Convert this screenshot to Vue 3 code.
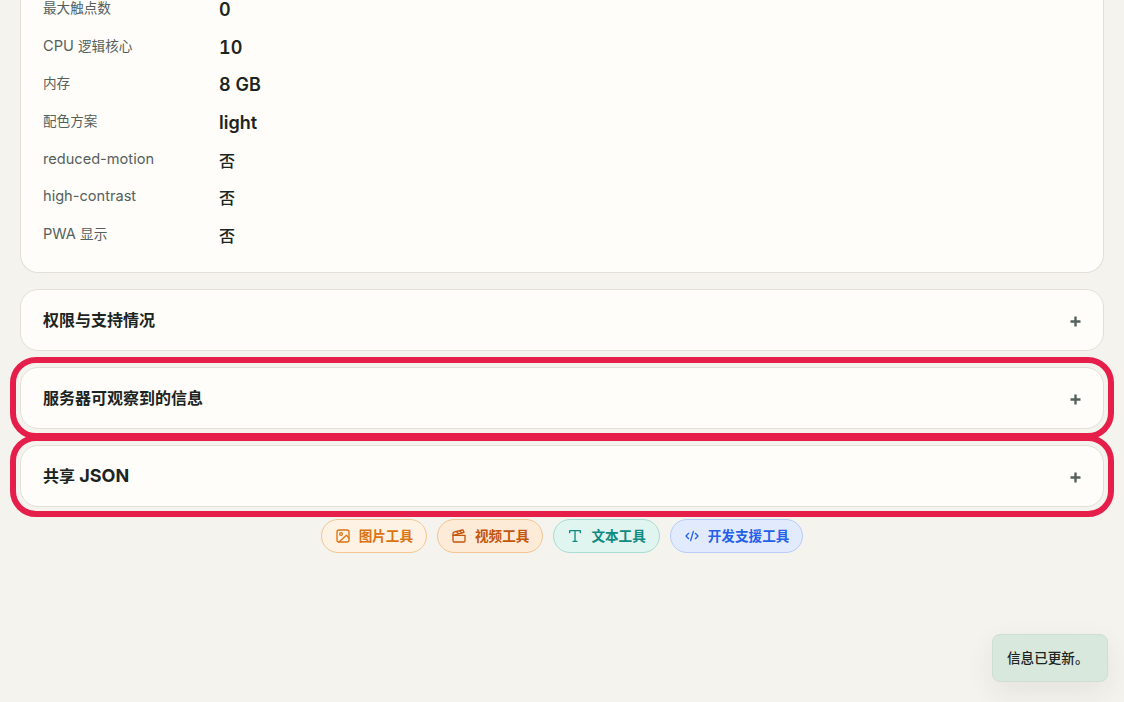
<script setup>
const split = (t) => t.split(/([\x00-\x7f]+)/).filter(Boolean).map((text) => ({
  text,
  lat: /^[\x00-\x7f]+$/.test(text),
}))

const rows = [
  ['最大触点数', '0'],
  ['CPU 逻辑核心', '10'],
  ['内存', '8 GB'],
  ['配色方案', 'light'],
  ['reduced-motion', '否'],
  ['high-contrast', '否'],
  ['PWA 显示', '否'],
].map(([label, value]) => ({ key: label, label: split(label), value: split(value) }))

const panels = [
  { key: 'a', title: split('权限与支持情况'), marked: false },
  { key: 'b', title: split('服务器可观察到的信息'), marked: true },
  { key: 'c', title: split('共享 JSON'), marked: true },
]
</script>

<template>
  <div class="page">
    <section class="card">
      <div v-for="r in rows" :key="r.key" class="row">
        <span class="label"><span v-for="(s, i) in r.label" :key="i" :class="{ lat: s.lat }">{{ s.text }}</span></span>
        <span class="value"><span v-for="(s, i) in r.value" :key="i" :class="{ lat: s.lat }">{{ s.text }}</span></span>
      </div>
    </section>

    <div class="panels">
      <div v-for="p in panels" :key="p.key" class="panel">
        <span class="panel-title"><span v-for="(s, i) in p.title" :key="i" :class="{ lat: s.lat }">{{ s.text }}</span></span>
        <svg class="plus" width="11" height="11" viewBox="0 0 11 11" aria-hidden="true">
          <path d="M5.500 0.500v10M0.500 5.500h10" stroke="currentColor" stroke-width="2.400" fill="none" />
        </svg>
        <span v-if="p.marked" class="mark"></span>
      </div>
    </div>

    <nav class="tools">
      <a class="tool orange">
        <svg width="16" height="16" viewBox="0 0 24 24" fill="none" stroke="currentColor" stroke-width="2" stroke-linecap="round" stroke-linejoin="round">
          <rect x="3" y="3" width="18" height="18" rx="3" />
          <circle cx="9" cy="9" r="2" />
          <path d="M21 15l-4-4L6 21" />
        </svg>
        <span class="tool-text">图片工具</span>
      </a>
      <a class="tool amber">
        <svg width="16" height="16" viewBox="0 0 24 24" fill="none" stroke="currentColor" stroke-width="2" stroke-linecap="round" stroke-linejoin="round">
          <path d="M3 11h18v8a2 2 0 0 1-2 2H5a2 2 0 0 1-2-2z" />
          <path d="M3 11V8a2 2 0 0 1 1.500-1.900L17 3l1 0 1.500 3.500L3.500 11" />
          <path d="M8 5l3 3.500M13 4l3 3.500" />
        </svg>
        <span class="tool-text">视频工具</span>
      </a>
      <a class="tool teal">
        <svg width="16" height="16" viewBox="0 0 24 24" fill="none" stroke="currentColor" stroke-width="2" stroke-linecap="round" stroke-linejoin="round">
          <path d="M4 7V4h16v3M12 4v16M9 20h6" />
        </svg>
        <span class="tool-text">文本工具</span>
      </a>
      <a class="tool blue">
        <svg width="16" height="16" viewBox="0 0 24 24" fill="none" stroke="currentColor" stroke-width="2" stroke-linecap="round" stroke-linejoin="round">
          <path d="M7 8l-4 4 4 4M17 8l4 4-4 4M14 5l-4 14" />
        </svg>
        <span class="tool-text">开发支援工具</span>
      </a>
    </nav>

    <div class="toast">信息已更新。</div>
  </div>
</template>

<style>
html, body {
  margin: 0;
  background: #f5f3ee;
  overflow: hidden;
}
</style>

<style scoped>
.page {
  position: relative;
  height: 702px;
  overflow: hidden;
  box-sizing: border-box;
  padding: 0 20px;
  background: #f5f3ee;
  color: #1c2422;
  font-family: Inter, "Noto Sans CJK SC", sans-serif;
}
.card {
  margin-top: -20px;
  padding: 10px 22px 18px;
  background: #fefdf9;
  border: 1px solid #e2dfd8;
  border-top: 0;
  border-radius: 0 0 18px 18px;
}
.row {
  display: flex;
  align-items: center;
  height: 37.700px;
}
.label {
  width: 176px;
  font-size: 13.600px;
  line-height: 20px;
  color: #55605c;
  transform: translateY(-1px);
}
.label .lat {
  font-size: 14.600px;
}
.value {
  font-size: 16px;
  line-height: 24px;
  font-weight: 500;
  color: #1c2422;
  transform: translateY(1px);
}
.value .lat {
  font-size: 18px;
  font-weight: 600;
  font-variant-numeric: tabular-nums;
}
.panels {
  display: flex;
  flex-direction: column;
  gap: 16.500px;
  margin-top: 16.500px;
}
.panel {
  position: relative;
  display: flex;
  align-items: center;
  justify-content: space-between;
  box-sizing: border-box;
  height: 61.500px;
  padding: 0 22px;
  background: #fefdf9;
  border: 1px solid #e2dfd8;
  border-radius: 18px;
}
.panel-title {
  font-size: 16px;
  font-weight: 700;
  color: #1c2422;
  transform: translateY(-1px);
}
.panel-title .lat {
  font-size: 18px;
}
.plus {
  color: #56625e;
  margin-top: 3px;
}
.mark {
  position: absolute;
  inset: -11px -11px -11px;
  border: 6px solid #e51e4a;
  border-radius: 26px;
  pointer-events: none;
}
.tools {
  display: flex;
  justify-content: center;
  gap: 10px;
  margin-top: 12.200px;
}
.tool {
  display: inline-flex;
  align-items: center;
  gap: 8px;
  box-sizing: border-box;
  height: 34px;
  padding: 0 13px;
  border: 1px solid;
  border-radius: 17px;
  font-size: 13.600px;
  font-weight: 700;
}
.tool-text {
  transform: translateY(-1px);
}
.orange { color: #db7412; background: #fef2e4; border-color: #f4c791; }
.amber { color: #c4560a; background: #fdead7; border-color: #f3c595; }
.teal { color: #0f8a82; background: #e0f4f0; border-color: #a9dcd3; }
.blue { color: #2461e8; background: #e2ebfe; border-color: #b7cdf8; }
.toast {
  position: absolute;
  right: 16px;
  bottom: 20px;
  display: flex;
  align-items: center;
  box-sizing: border-box;
  width: 116px;
  height: 48px;
  padding: 0 14px 3px;
  background: #d8e8dd;
  border: 1px solid #cfded4;
  border-radius: 8px;
  font-size: 13.600px;
  font-weight: 500;
  color: #1c2422;
  box-shadow: 0 10px 28px rgba(30, 40, 35, 0.08);
}
</style>
